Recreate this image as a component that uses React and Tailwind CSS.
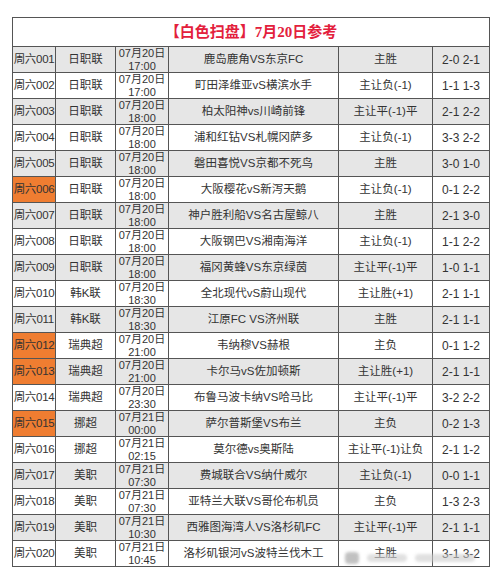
const rows = [
  ['周六001', '日职联', '07月20日', '17:00', '鹿岛鹿角VS东京FC', '主胜', '2-0 2-1', false],
  ['周六002', '日职联', '07月20日', '17:00', '町田泽维亚vS横滨水手', '主让负(-1)', '1-1 1-3', false],
  ['周六003', '日职联', '07月20日', '18:00', '柏太阳神vs川崎前锋', '主让平(-1)平', '2-1 2-2', false],
  ['周六004', '日职联', '07月20日', '18:00', '浦和红钻VS札幌冈萨多', '主让负(-1)', '3-3 2-2', false],
  ['周六005', '日职联', '07月20日', '18:00', '磐田喜悦VS京都不死鸟', '主胜', '3-0 1-0', false],
  ['周六006', '日职联', '07月20日', '18:00', '大阪樱花vS新泻天鹅', '主让负(-1)', '0-1 2-2', true],
  ['周六007', '日职联', '07月20日', '18:00', '神户胜利船VS名古屋鲸八', '主胜', '2-1 3-0', false],
  ['周六008', '日职联', '07月20日', '18:00', '大阪钢巴VS湘南海洋', '主让负(-1)', '1-1 2-2', false],
  ['周六009', '日职联', '07月20日', '18:00', '福冈黄蜂VS东京绿茵', '主让平(-1)平', '1-0 1-1', false],
  ['周六010', '韩K联', '07月20日', '18:30', '全北现代vS蔚山现代', '主让胜(+1)', '2-1 1-1', false],
  ['周六011', '韩K联', '07月20日', '18:30', '江原FC VS济州联', '主胜', '2-1 1-1', false],
  ['周六012', '瑞典超', '07月20日', '21:00', '韦纳穆VS赫根', '主负', '0-1 1-2', true],
  ['周六013', '瑞典超', '07月20日', '21:00', '卡尔马vS佐加顿斯', '主让胜(+1)', '2-1 1-1', true],
  ['周六014', '瑞典超', '07月20日', '23:30', '布鲁马波卡纳VS哈马比', '主让平(-1)平', '3-2 2-2', false],
  ['周六015', '挪超', '07月21日', '00:00', '萨尔普斯堡VS布兰', '主负', '0-2 1-3', true],
  ['周六016', '挪超', '07月21日', '02:15', '莫尔德vs奥斯陆', '主让平(-1)让负', '2-1 1-2', false],
  ['周六017', '美职', '07月21日', '07:30', '费城联合VS纳什威尔', '主让负(-1)', '0-0 1-1', false],
  ['周六018', '美职', '07月21日', '07:30', '亚特兰大联VS哥伦布机员', '主负', '1-3 2-3', false],
  ['周六019', '美职', '07月21日', '10:30', '西雅图海湾人VS洛杉矶FC', '主让平(-1)平', '2-1 1-1', false],
  ['周六020', '美职', '07月21日', '10:45', '洛杉矶银河vS波特兰伐木工', '主胜', '3-1 3-2', false],
];

function App() {
  return (
    <div className="relative w-[500px] h-[580px] bg-white pt-[17px] pl-[12px] font-['Liberation_Sans','Noto_Sans_CJK_SC',sans-serif] text-[11.5px] text-[#333]">
      <table className="table-fixed border-collapse w-[477px]">
        <colgroup>
          <col className="w-[43px]" />
          <col className="w-[60px]" />
          <col className="w-[53px]" />
          <col className="w-[170px]" />
          <col className="w-[94px]" />
          <col className="w-[57px]" />
        </colgroup>
        <thead>
          <tr className="h-[29px]">
            <th colSpan={6} className="border border-[#555] text-center font-bold text-[15px] text-[#e3203c] leading-none font-['Liberation_Serif','Noto_Sans_CJK_SC',serif]">
              【白色扫盘】7月20日参考
            </th>
          </tr>
        </thead>
        <tbody>
          {rows.map((r, i) => (
            <tr key={r[0]} className={'h-[26px] ' + (i % 2 === 0 ? 'bg-[#e6e6e6]' : 'bg-white')}>
              <td className={'border border-[#555] text-center whitespace-nowrap tracking-[-0.3px] p-0 ' + (r[7] ? 'bg-[#ef7d31]' : '')}>{r[0]}</td>
              <td className="border border-[#555] text-center p-0">{r[1]}</td>
              <td className="border border-[#555] text-center text-[11px] leading-[12.5px] whitespace-nowrap p-0">
                <div>{r[2]}</div>
                <div>{r[3]}</div>
              </td>
              <td className="border border-[#555] text-center whitespace-nowrap p-0">{r[4]}</td>
              <td className="border border-[#555] text-center whitespace-nowrap p-0">{r[5]}</td>
              <td className="border border-[#555] text-center whitespace-pre p-0 text-[12px]">{r[6]}</td>
            </tr>
          ))}
        </tbody>
      </table>
      <div className="absolute left-[345px] top-[546px] w-[145px] h-[24px] flex items-center gap-2 blur-[1.5px] opacity-60">
        <div className="w-[14px] h-[12px] bg-[#999] rounded-sm" />
        <div className="w-[40px] h-[8px] bg-[#ccc] rounded" />
        <div className="w-[60px] h-[8px] bg-[#ccc] rounded" />
      </div>
    </div>
  );
}

export default App;
